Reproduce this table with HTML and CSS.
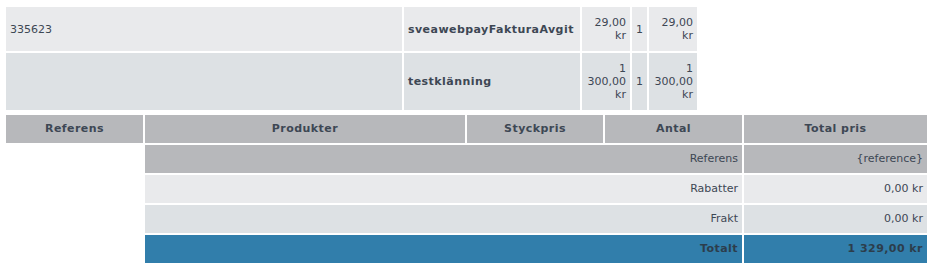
FILE: index.html
```html
<!DOCTYPE html>
<html lang="sv">
<head>
<meta charset="utf-8">
<title>Order</title>
<link rel="stylesheet" href="styles.css">
</head>
<body>
<div class="page">
  <table class="items">
    <colgroup>
      <col class="c-ref"><col class="c-name"><col class="c-price"><col class="c-qty"><col class="c-price">
    </colgroup>
    <tbody>
      <tr class="light">
        <td>335623</td>
        <td class="name">sveawebpayFakturaAvgit</td>
        <td class="num">29,00 kr</td>
        <td class="num">1</td>
        <td class="num">29,00 kr</td>
      </tr>
      <tr class="dark">
        <td></td>
        <td class="name">testklänning</td>
        <td class="num">1 300,00 kr</td>
        <td class="num">1</td>
        <td class="num">1 300,00 kr</td>
      </tr>
    </tbody>
  </table>
  <table class="summary">
    <colgroup>
      <col class="s-ref"><col class="s-prod"><col class="s-unit"><col class="s-qty"><col class="s-total">
    </colgroup>
    <thead>
      <tr class="head">
        <th>Referens</th>
        <th>Produkter</th>
        <th>Styckpris</th>
        <th>Antal</th>
        <th>Total pris</th>
      </tr>
    </thead>
    <tbody>
      <tr class="grey">
        <td class="blank"></td>
        <td class="label" colspan="3">Referens</td>
        <td class="value">{reference}</td>
      </tr>
      <tr class="light">
        <td class="blank"></td>
        <td class="label" colspan="3">Rabatter</td>
        <td class="value">0,00 kr</td>
      </tr>
      <tr class="dark">
        <td class="blank"></td>
        <td class="label" colspan="3">Frakt</td>
        <td class="value">0,00 kr</td>
      </tr>
      <tr class="total">
        <td class="blank"></td>
        <td class="label" colspan="3">Totalt</td>
        <td class="value">1 329,00 kr</td>
      </tr>
    </tbody>
  </table>
</div>
</body>
</html>
```
FILE: styles.css
```css
html, body {
  margin: 0;
  padding: 0;
  background: #ffffff;
}

body {
  font-family: "DejaVu Sans", Verdana, sans-serif;
  font-size: 11px;
  color: #3d4754;
}

.page {
  padding: 5px 4px 0 4px;
}

table {
  border-collapse: separate;
  border-spacing: 2px;
  table-layout: fixed;
}

td, th {
  padding: 9px 4px;
  vertical-align: middle;
  text-align: left;
}

/* top items table */
.items {
  width: 695px;
}
.c-ref { width: 396px; }
.c-name { width: 176px; }
.c-price { width: 48px; }
.c-qty { width: 15px; }

.items .name {
  font-weight: bold;
  letter-spacing: 0.45px;
}
.items .num {
  text-align: right;
}

.light td { background: #e9eaec; }
.dark td { background: #dde1e4; }
.grey td { background: #b7b8bb; }
.total td {
  background: #317eab;
  font-weight: bold;
  letter-spacing: 0.45px;
  color: #2c3d4c;
}

/* summary table */
.summary {
  width: 925px;
  margin-top: 1px;
}
.s-ref { width: 137px; }
.s-prod { width: 320px; }
.s-unit { width: 136px; }
.s-qty { width: 137px; }
.s-total { width: 183px; }

.summary th,
.summary td {
  padding: 7px 4px 8px 4px;
}

.summary .head th {
  background: #b7b8bb;
  font-weight: bold;
  letter-spacing: 0.45px;
  text-align: center;
}

.summary td.blank {
  background: transparent;
}

.summary .label,
.summary .value {
  text-align: right;
}
```
